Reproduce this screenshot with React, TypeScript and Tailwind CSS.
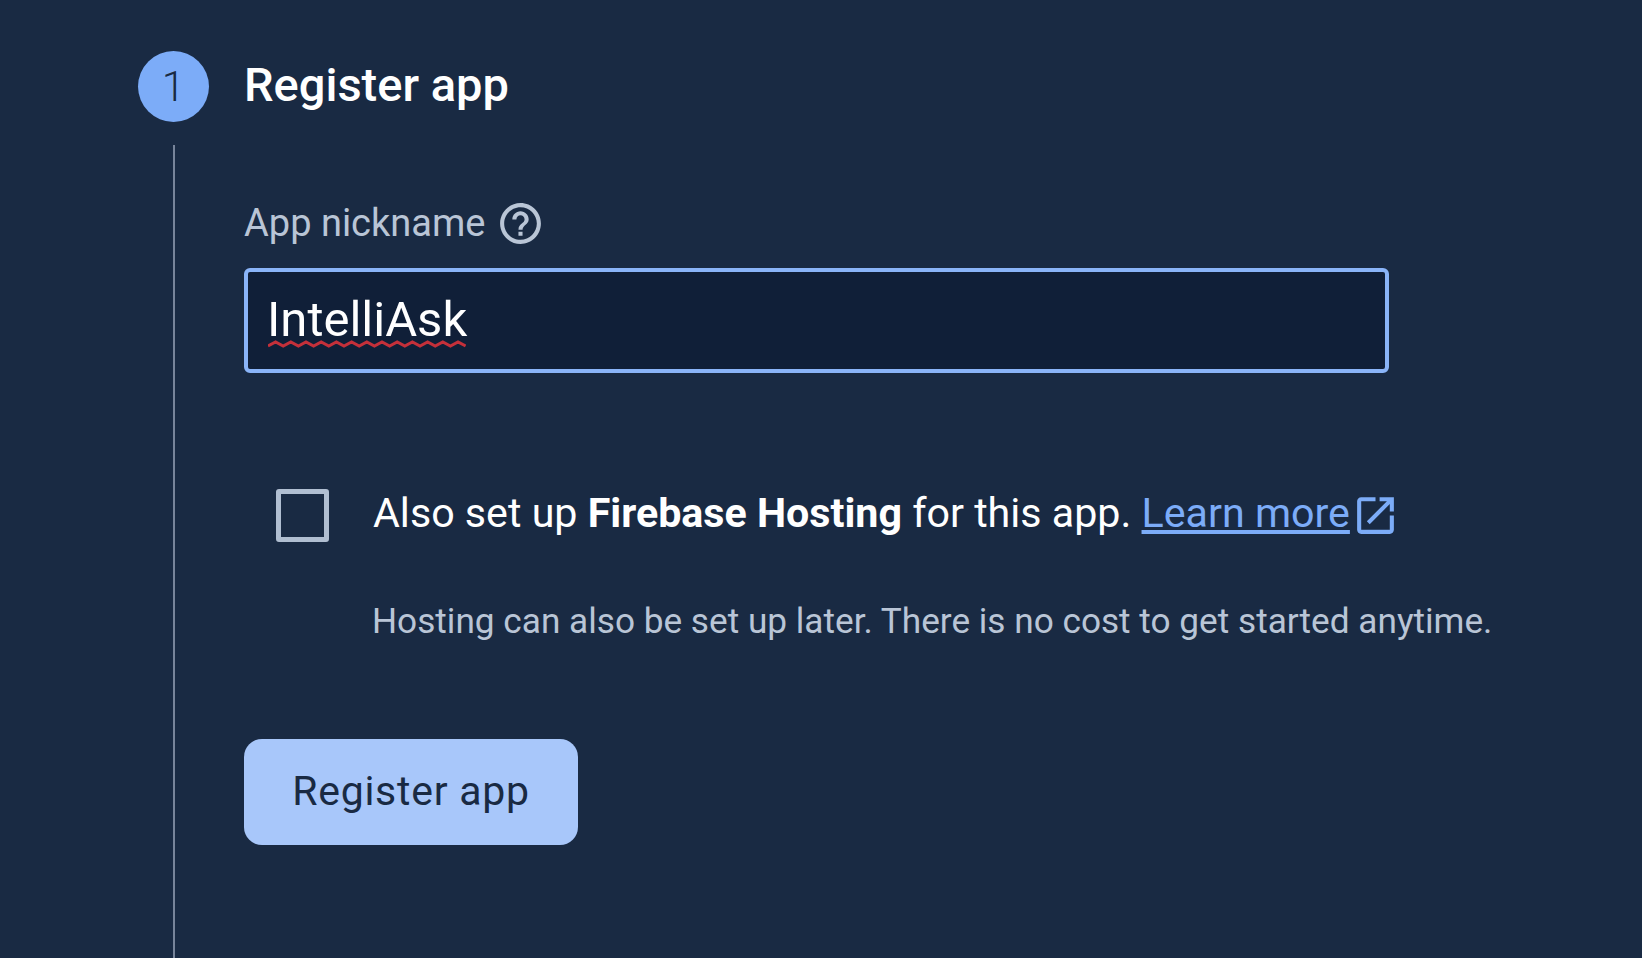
const HelpIcon = () => (
  <svg viewBox="0 0 24 24" className="w-[49px] h-[49px] fill-[#b9c5d6]">
    <path d="M11 18h2v-2h-2v2zm1-16C6.48 2 2 6.48 2 12s4.48 10 10 10 10-4.48 10-10S17.52 2 12 2zm0 18c-4.41 0-8-3.59-8-8s3.59-8 8-8 8 3.59 8 8-3.59 8-8 8zm0-14c-2.21 0-4 1.79-4 4h2c0-1.1.9-2 2-2s2 .9 2 2c0 2-3 1.75-3 5h2c0-2.25 3-2.5 3-5 0-2.21-1.79-4-4-4z" />
  </svg>
);

const OpenIcon = () => (
  <svg viewBox="0 0 24 24" className="w-[49px] h-[49px] fill-[#7cacf8] ml-[1px]">
    <path d="M19 19H5V5h7V3H5c-1.11 0-2 .9-2 2v14c0 1.1.89 2 2 2h14c1.1 0 2-.9 2-2v-7h-2v7zM14 3v2h3.59l-9.83 9.83 1.41 1.41L19 6.41V10h2V3h-7z" />
  </svg>
);

// spell check underline
const Squiggle = () => {
  let d = "M0 6";
  for (let i = 0; i < 13; i++) d += ` l${7.6} -4 l${7.6} 4`;
  return (
    <svg viewBox="0 0 198 8" className="absolute left-[20px] top-[68px] w-[198px] h-[8px]" fill="none">
      <path d={d} stroke="#c5303a" strokeWidth="3" />
    </svg>
  );
};

export default function App() {
  return (
    <div className="h-screen overflow-hidden bg-[#192a43] pl-[138px] pt-[51px] font-[Roboto,sans-serif]">
      {/* Step header */}
      <div className="flex items-center gap-[35px] h-[71px]">
        <div className="w-[71px] h-[71px] rounded-full bg-[#7cacf8] flex items-center justify-center text-[42px] font-light text-[#192a43]">
          1
        </div>
        <h2 className="text-[47px] font-medium text-white -mt-[2px]">Register app</h2>
      </div>

      {/* Step body */}
      <div className="ml-[35px] mt-[23px] h-[900px] border-l-2 border-[#77849a] pl-[69px] pt-[54px]">
        <div className="flex items-center gap-[11px] h-[49px] text-[38px] text-[#b9c5d6]">
          App nickname
          <HelpIcon />
        </div>
        <div className="relative mt-[20px] w-[1145px] h-[105px] rounded-[6px] border-[4px] border-[#8ab4f8] bg-[#101f38] pl-[19px] pb-[2px] flex items-center text-[49px] text-white">
          IntelliAsk
          <Squiggle />
        </div>

        <div className="flex items-center mt-[116px] ml-[32px] h-[53px]">
          <div className="w-[53px] h-[53px] rounded-[3px] border-[5px] border-[#b0bed1]" />
          <p className="ml-[44px] -mt-[3px] text-[41.2px] text-white whitespace-nowrap">
            Also set up <b className="font-bold">Firebase Hosting</b> for this app.{" "}
            <a className="text-[#7cacf8] underline underline-offset-[3px]">Learn more</a>
          </p>
          <OpenIcon />
        </div>
        <p className="ml-[128px] mt-[57px] text-[35.2px] leading-[44px] text-[#b9c5d6] whitespace-nowrap">
          Hosting can also be set up later. There is no cost to get started anytime.
        </p>

        <button className="mt-[96px] w-[334px] h-[106px] rounded-[18px] bg-[#a8c7fa] text-[41px] font-[450] tracking-[0.75px] text-[#192a43]">
          Register app
        </button>
      </div>
    </div>
  );
}
